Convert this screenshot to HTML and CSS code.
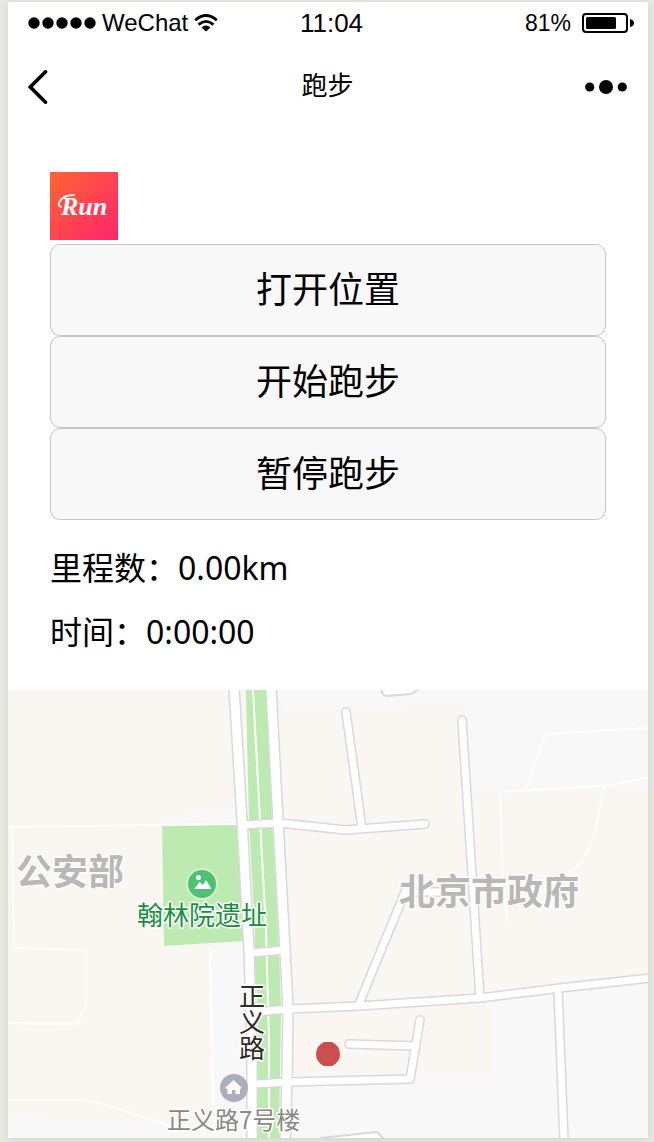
FILE: index.html
```html
<!DOCTYPE html>
<html lang="zh-CN">
<head>
<meta charset="utf-8">
<meta name="viewport" content="width=device-width, initial-scale=1">
<title>跑步</title>
<link rel="stylesheet" href="styles.css">
</head>
<body>
<div class="phone">
  <header>
    <div class="status">
      <div class="status-left">
        <svg class="signal" viewBox="0 0 68 12" aria-hidden="true"><circle cx="6" cy="6" r="5.7"/><circle cx="20" cy="6" r="5.7"/><circle cx="34" cy="6" r="5.7"/><circle cx="48" cy="6" r="5.7"/><circle cx="62" cy="6" r="5.7"/></svg>
        <span class="carrier">WeChat</span>
        <svg class="wifi" viewBox="0 0 24 18" aria-hidden="true"><path d="M1.2 6.2Q12-3.2 22.8 6.2M4.500 10.600Q12 4.200 19.500 10.600" fill="none" stroke="#000" stroke-width="2.7"/><path d="M7.500 13.600Q12 9.600 16.500 13.600L12 17.6Z"/></svg>
      </div>
      <time class="clock">11:04</time>
      <div class="status-right">
        <span class="percent">81%</span>
        <svg class="battery" viewBox="0 0 53 20" aria-hidden="true"><rect x="1" y="1" width="44" height="18" rx="3" fill="none" stroke="#000" stroke-width="2"/><rect x="4" y="4" width="30" height="12" rx="1.5"/><path d="M48 6Q52 7 52 10T48 14Z"/></svg>
      </div>
    </div>
    <nav class="nav">
      <button class="icon-button back" type="button" aria-label="返回"><svg class="chevron" viewBox="0 0 20 34"><path d="M17.5 1.8L2.300 17L17.5 32.2" fill="none" stroke="#000" stroke-width="3.6" stroke-linecap="round"/></svg></button>
      <h1 class="title">跑步</h1>
      <button class="icon-button more" type="button" aria-label="更多"><svg class="dots" viewBox="0 0 42 14"><circle cx="4.7" cy="7" r="4.6"/><circle cx="21" cy="7" r="7"/><circle cx="37.3" cy="7" r="4.6"/></svg></button>
    </nav>
  </header>
  <main>
    <section class="panel">
      <svg class="logo" viewBox="0 0 68 68" role="img" aria-label="Run">
        <path d="M11 35Q7 33 10 29Q14 23 24 23" fill="none" stroke="#fff" stroke-width="1.8" stroke-linecap="round"/>
        <text class="logo-text" x="11" y="43">Run</text>
      </svg>
      <div class="actions">
        <button class="action" type="button">打开位置</button>
        <button class="action" type="button">开始跑步</button>
        <button class="action" type="button">暂停跑步</button>
      </div>
      <div class="stats">
        <p class="stat">里程数：0.00km</p>
        <p class="stat">时间：0:00:00</p>
      </div>
    </section>
    <svg class="map" viewBox="8 690 640 448" role="img" aria-label="地图">
      <rect class="land" x="8" y="690" width="640" height="448"/>
      <g class="plain">
        <path d="M274 690H648V789H472L463 702L283 713Z"/>
        <path d="M493 1002L648 983V1138H288V1081L410 1076H493Z"/>
        <path d="M210 947L244 941L254 1138H213Z"/>
        <path d="M160 824L162 817L238 808V824Z"/>
        <path d="M8 1117L150 1124L213 1130V1138H8Z"/>
      </g>
      <g class="green">
        <path d="M162 825L238 823L243 941L164 946Z"/>
        <path d="M246 690H266L272 820L279 950L281 1010L279 1138H258V1010L255 970V930L249 820Z"/>
      </g>
      <g class="path">
        <path d="M8 827L238 824M12 828L14 948L86 950V1005L77 1024L8 1023"/>
        <path d="M8 1100H80Q100 1102 120 1109L170 1126L250 1134M210 947L213 1106"/>
        <path d="M526 789L546 734L648 728M508 922L503 890L500 792L604 786L648 778M604 786L593 840L582 862L565 876"/>
      </g>
      <path class="median" d="M253 690L260 820L266 930L269 1040V1138"/>
      <g class="road casing">
        <path class="main" d="M234 688L242 820L249 950L252 1050V1140M271 688L278 820L285 950L288 1008L287 1080L285 1140"/>
        <path d="M242 825L280 823L346 830L425 824M250 953L285 950M254 1012L290 1009L359 1006L480 998L560 988L650 978M252 1084L290 1082L410 1079L420 1020M349 1044L415 1046"/>
        <path d="M346 712L362 828M462 720L480 998M440 892L405 892L359 1004M558 990L564 1140"/>
      </g>
      <g class="road fill">
        <path class="main" d="M234 688L242 820L249 950L252 1050V1140M271 688L278 820L285 950L288 1008L287 1080L285 1140"/>
        <path d="M242 825L280 823L346 830L425 824M250 953L285 950M254 1012L290 1009L359 1006L480 998L560 988L650 978M252 1084L290 1082L410 1079L420 1020M349 1044L415 1046"/>
        <path d="M346 712L362 828M462 720L480 998M440 892L405 892L359 1004M558 990L564 1140"/>
      </g>
      <path class="block" d="M381 688Q382 696 387 696L411 694L422 687M320 1138L377 1132L386 1141"/>
      <circle cx="202" cy="884" r="15" fill="#4cc374" stroke="#d8f2cf" stroke-width="2"/>
      <circle cx="198.500" cy="877.500" r="2.500" fill="#fff"/>
      <path d="M194 889L199.500 882L203 885L206 880L211.500 889Z" fill="#fff"/>
      <circle cx="234" cy="1088" r="14" fill="#adaebb"/>
      <path d="M225 1088L233.500 1080L242 1088L240 1089V1094H235.500V1090H232V1094H227.500V1089Z" fill="#fff"/>
      <text class="label area" x="16" y="885">公安部</text>
      <text class="label area" x="399" y="905">北京市政府</text>
      <text class="label park" x="137" y="925">翰林院遗址</text>
      <text class="label street" x="252" y="983">正义路</text>
      <text class="label house" x="167" y="1129">正义路7号楼</text>
      <path d="M324 1042H332Q340 1046 340 1054T332 1066H324Q316 1062 316 1054T324 1042Z" fill="#cc4e4e"/>
    </svg>
  </main>
</div>
</body>
</html>
```
FILE: styles.css
```css
* { box-sizing: border-box; }
body {
  margin: 0;
  padding: 2px 6px 4px 8px;
  background: #e9e9e4;
  color: #000;
  font-family: "Noto Sans CJK SC", sans-serif;
}
.phone {
  background: #fff;
  box-shadow: 0 2px 10px rgba(0, 0, 0, 0.1);
}
svg { display: block; }
.status {
  display: grid;
  grid-template-columns: 1fr auto 1fr;
  align-items: center;
  height: 42px;
  padding: 0 13px 0 20px;
  font-family: "Liberation Sans", Arial, sans-serif;
}
.status-left, .status-right {
  display: flex;
  align-items: center;
  gap: 6px;
}
.status-right { justify-content: flex-end; gap: 11px; }
.signal { width: 68px; height: 12px; }
.wifi { width: 24px; height: 18px; }
.battery { width: 53px; height: 20px; }
.carrier { font-size: 24px; }
.clock { font-size: 26px; }
.percent { font-size: 23px; }
.nav {
  display: grid;
  grid-template-columns: 1fr auto 1fr;
  align-items: center;
  height: 86px;
  padding: 0 21px 0 20px;
}
.title {
  margin: 0;
  padding-bottom: 6px;
  font-size: 26px;
  line-height: 36px;
  font-weight: 400;
}
.icon-button {
  padding: 0;
  border: 0;
  background: none;
}
.more { justify-self: end; }
.chevron { width: 20px; height: 34px; }
.dots { width: 42px; height: 14px; }
.panel { padding: 42px 42px 26px; }
.logo {
  width: 68px;
  height: 68px;
  margin-bottom: 4px;
  background: linear-gradient(135deg, #ff6432, #ff256d);
}
.logo-text {
  fill: #fff;
  font: italic bold 26px "Liberation Serif", serif;
}
.actions { display: flex; flex-direction: column; }
.action {
  height: 92px;
  padding: 0 0 6px;
  border: 1px solid #c6c6c6;
  border-radius: 10px;
  background: #f8f8f8;
  color: #000;
  font-family: inherit;
  font-size: 36px;
}
.stats { padding-top: 16px; }
.stat {
  margin: 0;
  font-family: "Noto Sans", "Noto Sans CJK SC", sans-serif;
  font-size: 32px;
  line-height: 64px;
}
.map { width: 100%; height: auto; }
.land { fill: #faf7f2; }
.plain { fill: #f8f8f8; }
.green { fill: #bceab0; }
.path, .median {
  fill: none;
  stroke: #fff;
  stroke-width: 2;
}
.road {
  fill: none;
  stroke-linecap: round;
  stroke-linejoin: round;
}
.casing { stroke: #d9d8da; stroke-width: 10; }
.fill { stroke: #fff; stroke-width: 7; }
.casing .main { stroke-width: 12; }
.fill .main { stroke-width: 9; }
.block { fill: #fff; stroke: #d9d8da; stroke-width: 2; }
.label {
  paint-order: stroke;
  stroke: #fff;
  stroke-width: 3;
  stroke-linejoin: round;
}
.area { fill: #bab8b5; font-size: 36px; font-weight: 700; }
.park { fill: #18913f; font-size: 26px; }
.street { fill: #302c2a; font-size: 26px; writing-mode: vertical-rl; }
.house { fill: #8c8780; font-size: 24px; }
```
